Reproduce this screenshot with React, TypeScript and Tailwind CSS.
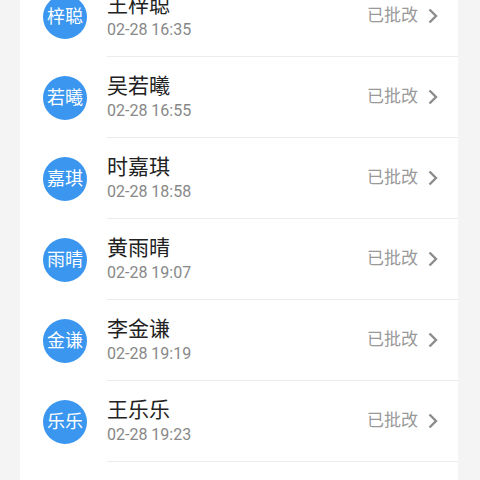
import React from "react";

type Item = Readonly<{ name: string; short: string; time: string }>;

const items: Item[] = [
  { name: "王梓聪", short: "梓聪", time: "02-28 16:35" },
  { name: "吴若曦", short: "若曦", time: "02-28 16:55" },
  { name: "时嘉琪", short: "嘉琪", time: "02-28 18:58" },
  { name: "黄雨晴", short: "雨晴", time: "02-28 19:07" },
  { name: "李金谦", short: "金谦", time: "02-28 19:19" },
  { name: "王乐乐", short: "乐乐", time: "02-28 19:23" },
];

function Row({ name, short, time }: Item) {
  return (
    <div className="flex items-center h-[81px] pl-[23px]">
      <div className="flex items-center justify-center w-[44px] h-[44px] rounded-full bg-[#3a96ef] text-white text-[18px] shrink-0">
        {short}
      </div>
      <div className="flex items-center flex-1 h-full ml-[20px] border-b border-[#ececec] pr-[19px]">
        <div className="flex flex-col flex-1">
          <div className="text-[21px] leading-[26px] text-[#222]">{name}</div>
          <div className="text-[16px] leading-[20px] mt-[2px] text-[#888]">{time}</div>
        </div>
        <div className="text-[17px] text-[#999]">已批改</div>
        <svg width="12" height="16" viewBox="0 0 12 16" className="ml-[9px]">
          <path d="M2.5 1.5 L9 8 L2.5 14.5" fill="none" stroke="#8c8c8c" strokeWidth="2.4" />
        </svg>
      </div>
    </div>
  );
}

export default function App() {
  return (
    <div
      className="w-[480px] h-[480px] overflow-hidden bg-[#f4f4f4] px-[20px] flex"
      style={{ fontFamily: "Roboto, 'Noto Sans CJK SC', sans-serif" }}
    >
      <div className="flex-1 bg-white mr-[2px]">
        <div className="-mt-[24px]">
          {items.map((it) => (
            <Row key={it.name} {...it} />
          ))}
        </div>
      </div>
    </div>
  );
}
